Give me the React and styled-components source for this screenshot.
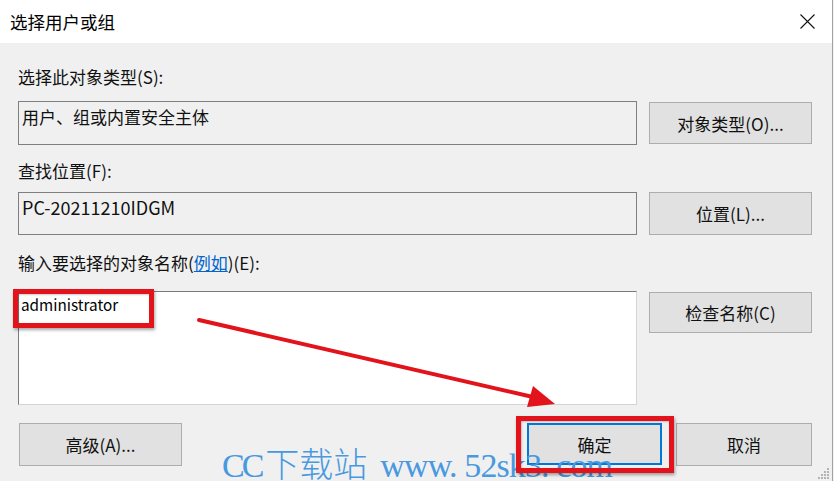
import React from 'react';
import styled, { createGlobalStyle } from 'styled-components';

const GlobalStyle = createGlobalStyle`
    html, body {
        margin: 0;
        padding: 0;
        background: #f0f0f0;
    }
    body {
        font-family: "Noto Sans CJK SC", "Noto Sans", sans-serif;
        color: #000;
    }
`;

const Window = styled.div`
    position: relative;
    width: 833px;
    height: 481px;
    box-sizing: border-box;
    border-right: 1px solid #a3a3a3;
    background: #f0f0f0;
    overflow: hidden;
`;

const TitleBar = styled.div`
    height: 43px;
    background: #fff;
    display: flex;
    align-items: center;
    justify-content: space-between;
    padding: 0 17px 0 10px;
`;

const Title = styled.span`
    font-size: 17.5px;
    line-height: 24px;
    color: #000;
`;

const CloseIcon = styled.svg`
    width: 15px;
    height: 15px;
    display: block;
`;

const Body = styled.div`
    padding: 0 20px 0 18px;
`;

const Label = styled.div`
    margin-top: ${p => p.$top}px;
    height: 24px;
    font-size: 17px;
    line-height: 24px;
    color: #111;
    white-space: nowrap;
`;

const Link = styled.span`
    color: #0066cc;
    text-decoration: underline;
`;

const FieldRow = styled.div`
    margin-top: ${p => p.$top}px;
    display: grid;
    grid-template-columns: 619px 163px;
    column-gap: 12px;
    align-items: ${p => p.$align || 'center'};
`;

const ReadBox = styled.div`
    height: ${p => p.$height}px;
    box-sizing: border-box;
    border: 1px solid #7f7f7f;
    background: #f0f0f0;
    padding: ${p => p.$padTop}px 3px 0;
    font-size: ${p => p.$size || 17}px;
    line-height: 24px;
    color: #111;
`;

const NameArea = styled.div`
    height: 114px;
    box-sizing: border-box;
    background: #fff;
    border-top: 1px solid #7a7a7a;
    border-left: 1px solid #7a7a7a;
    border-right: 1px solid #d4d4d4;
    border-bottom: 1px solid #d4d4d4;
    padding: 2px 2px;
    font-size: 15.3px;
    line-height: 20px;
    color: #000;
`;

const Button = styled.button`
    width: ${p => p.$width || 163}px;
    height: ${p => p.$height || 43}px;
    margin-top: ${p => p.$offset || 0}px;
    box-sizing: border-box;
    background: #e1e1e1;
    border: ${p => (p.$primary ? '2px solid #0078d7' : '1px solid #adadad')};
    border-radius: 0;
    font-family: inherit;
    font-size: 17px;
    color: #111;
    padding: 0;
    cursor: default;
`;

const Footer = styled.div`
    margin-top: 18px;
    display: flex;
    justify-content: space-between;
    align-items: center;
    padding-left: 1px;
`;

const ButtonGroup = styled.div`
    display: flex;
    gap: 14px;
`;

const Grip = styled.svg`
    position: absolute;
    right: 2px;
    bottom: 1px;
    width: 13px;
    height: 13px;
`;

const Highlight = styled.div`
    position: absolute;
    left: ${p => p.$x}px;
    top: ${p => p.$y}px;
    width: ${p => p.$w}px;
    height: ${p => p.$h}px;
    box-sizing: border-box;
    border: 5px solid #e3131b;
    box-shadow: 1px 2px 3px rgba(0, 0, 0, 0.35), inset 1px 1px 2px rgba(0, 0, 0, 0.2);
    pointer-events: none;
`;

const Overlay = styled.svg`
    position: absolute;
    left: 0;
    top: 0;
    width: 834px;
    height: 481px;
    pointer-events: none;
`;

const Watermark = styled.div`
    position: absolute;
    left: 222px;
    top: 449px;
    display: flex;
    align-items: baseline;
    font-family: "Liberation Serif", "Noto Sans CJK SC", serif;
    font-size: 34px;
    line-height: 34px;
    color: #4899df;
    white-space: pre;
    pointer-events: none;
`;

const WmPart = styled.span`
    letter-spacing: ${p => p.$spacing}px;
    margin-right: ${p => p.$gap || 0}px;
    font-weight: ${p => (p.$cjk ? 300 : 400)};
`;

const App = () => {
    return (
        <>
            <GlobalStyle />
            <Window>
                <TitleBar>
                    <Title>选择用户或组</Title>
                    <CloseIcon viewBox="0 0 15 15">
                        <path d="M0.5 0.5 L14.5 14.5 M14.5 0.5 L0.5 14.5" stroke="#111" strokeWidth="1.1" fill="none" />
                    </CloseIcon>
                </TitleBar>

                <Body>
                    <Label $top={22}>选择此对象类型(S):</Label>
                    <FieldRow $top={12}>
                        <ReadBox $height={44} $padTop={3}>用户、组或内置安全主体</ReadBox>
                        <Button $height={42}>对象类型(O)...</Button>
                    </FieldRow>

                    <Label $top={14}>查找位置(F):</Label>
                    <FieldRow $top={9}>
                        <ReadBox $height={43} $padTop={2} $size={18}>PC-20211210IDGM</ReadBox>
                        <Button $height={43}>位置(L)...</Button>
                    </FieldRow>

                    <Label $top={16}>
                        输入要选择的对象名称(<Link>例如</Link>)(E):
                    </Label>
                    <FieldRow $top={16} $align="start">
                        <NameArea>administrator</NameArea>
                        <Button $height={41} $offset={1}>检查名称(C)</Button>
                    </FieldRow>

                    <Footer>
                        <Button $width={163}>高级(A)...</Button>
                        <ButtonGroup>
                            <Button $width={135} $height={42} $primary>确定</Button>
                            <Button $width={136}>取消</Button>
                        </ButtonGroup>
                    </Footer>
                </Body>

                <Grip viewBox="0 0 13 13">
                    {[[10, 1], [7, 4], [10, 4], [4, 7], [7, 7], [10, 7], [1, 10], [4, 10], [7, 10], [10, 10]].map(([x, y]) => (
                        <rect key={`${x}-${y}`} x={x} y={y} width="2" height="2" fill="#b4b4b4" />
                    ))}
                </Grip>

                <Watermark>
                    <WmPart $spacing={-3} $gap={4}>CC</WmPart>
                    <WmPart $spacing={0} $gap={13} $cjk>下载站</WmPart>
                    <WmPart $spacing={-0.9}>www. 52sk3. com</WmPart>
                </Watermark>

                <Highlight $x={13} $y={289} $w={141} $h={39} />
                <Highlight $x={516} $y={416} $w={158} $h={57} />

                <Overlay viewBox="0 0 834 481">
                    <line x1="199" y1="320" x2="533" y2="397" stroke="#e3131b" strokeWidth="4" strokeLinecap="round" />
                    <polygon points="555,404 527,407 533,386" fill="#e3131b" />
                </Overlay>
            </Window>
        </>
    );
};

export default App;
